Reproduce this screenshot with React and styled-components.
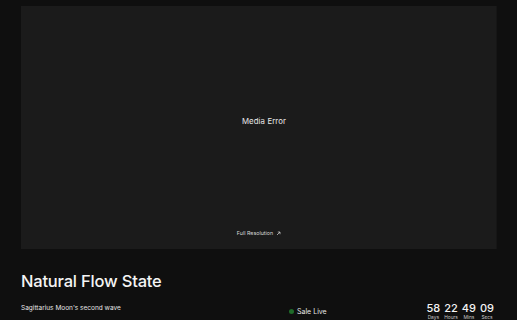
import React from "react";
import styled, { createGlobalStyle } from "styled-components";

const Global = createGlobalStyle`
    html, body {
        margin: 0;
        padding: 0;
        background: #0f0f0f;
        font-family: Inter, "Noto Sans", sans-serif;
        color: #ffffff;
        overflow: hidden;
    }
`;

const Page = styled.div`
    width: 517px;
    height: 320px;
    padding: 6px 20px 0 21px;
    box-sizing: border-box;
    background: #0f0f0f;
`;

const Media = styled.div`
    height: 243px;
    background: #1b1b1b;
    box-shadow: inset -1px 0 0 #161616;
    display: flex;
    flex-direction: column;
    align-items: center;
`;

const ErrorText = styled.div`
    margin-top: 110px;
    margin-left: 10px;
    font-size: 7.8px;
    letter-spacing: 0.1px;
    color: #e8e8e8;
`;

const FullRes = styled.div`
    margin-top: auto;
    margin-bottom: 13px;
    display: flex;
    align-items: center;
    gap: 3px;
    font-size: 5.3px;
    color: #d8d8d8;
`;

const Title = styled.h1`
    margin: 22px 0 0;
    font-size: 16.5px;
    font-weight: 500;
    letter-spacing: -0.2px;
    color: #f4f4f4;
`;

const Bottom = styled.div`
    display: flex;
    align-items: flex-start;
    margin-top: 10px;
`;

const Subtitle = styled.div`
    width: 268px;
    font-size: 6.5px;
    color: #e6e6e6;
    margin-top: 3px;
`;

const Status = styled.div`
    display: flex;
    align-items: center;
    gap: 3px;
    font-size: 7px;
    color: #e6e6e6;
    margin-top: 6px;
`;

const Dot = styled.span`
    width: 5px;
    height: 5px;
    border-radius: 50%;
    background: #1f6b2a;
`;

const Countdown = styled.div`
    margin-left: auto;
    margin-right: 3px;
    margin-top: 2px;
    display: flex;
    gap: 4px;
`;

const Unit = styled.div`
    display: flex;
    flex-direction: column;
    align-items: center;
`;

const Num = styled.div`
    font-size: 11px;
    font-weight: 500;
    line-height: 11px;
    color: #f4f4f4;
`;

const Label = styled.div`
    font-size: 4.8px;
    line-height: 5px;
    color: #c8c8c8;
    margin-top: 1px;
`;

const units = [
    { n: "58", l: "Days" },
    { n: "22", l: "Hours" },
    { n: "49", l: "Mins" },
    { n: "09", l: "Secs" },
];

const App = () => {
    return (
        <Page>
            <Global />
            <Media>
                <ErrorText>Media Error</ErrorText>
                <FullRes>
                    Full Resolution
                    <svg width="5" height="5" viewBox="0 0 10 10" fill="none" stroke="#d8d8d8" strokeWidth="1.4">
                        <path d="M2 8 L8 2 M3.5 2 H8 V6.5" />
                    </svg>
                </FullRes>
            </Media>
            <Title>Natural Flow State</Title>
            <Bottom>
                <Subtitle>Sagittarius Moon's second wave</Subtitle>
                <Status>
                    <Dot />
                    Sale Live
                </Status>
                <Countdown>
                    {units.map((u) => (
                        <Unit key={u.l}>
                            <Num>{u.n}</Num>
                            <Label>{u.l}</Label>
                        </Unit>
                    ))}
                </Countdown>
            </Bottom>
        </Page>
    );
};

export default App;
